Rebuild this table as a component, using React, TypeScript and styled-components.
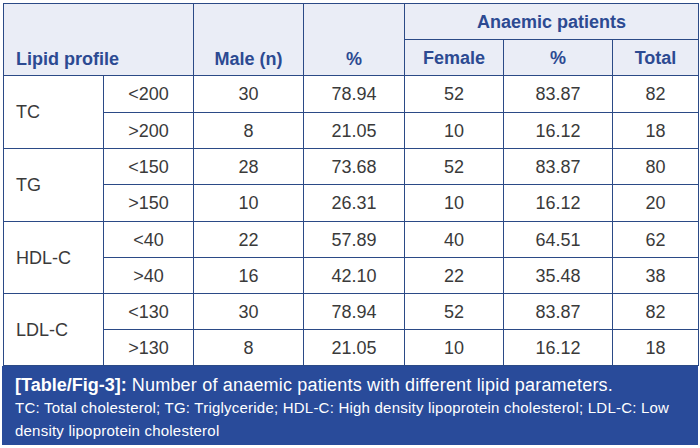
import React from "react";
import styled, { createGlobalStyle } from "styled-components";

const Global = createGlobalStyle`
  html, body { margin: 0; padding: 0; background: #ffffff; }
  body { font-family: "Liberation Sans", Arial, sans-serif; }
`;

const Page = styled.div`
  width: 700px;
  height: 448px;
  padding: 3px 2px 0 2px;
  box-sizing: border-box;
  background: #ffffff;
`;

const Table = styled.table`
  border-collapse: collapse;
  table-layout: fixed;
  width: 695px;
  margin-left: 1px;
`;

const Col = styled.col<{ $w: number }>`
  width: ${(p) => p.$w}px;
`;

const Th = styled.th<{ $left?: boolean; $h?: number }>`
  background: #eaedf6;
  color: #2c4a92;
  font-weight: bold;
  font-size: 18px;
  border: 1px solid #2b4a86;
  text-align: ${(p) => (p.$left ? "left" : "center")};
  padding: 2px 0 0 ${(p) => (p.$left ? "12px" : "0")};
  height: ${(p) => p.$h ?? 36}px;
  vertical-align: middle;
  box-sizing: border-box;
`;

const ThBottom = styled(Th)`
  vertical-align: bottom;
  padding-bottom: 5px;
`;

const Td = styled.td<{ $left?: boolean }>`
  color: #3a3a3a;
  font-size: 18px;
  border: 1px solid #2b4a86;
  text-align: ${(p) => (p.$left ? "left" : "center")};
  padding: 1px 0 0 ${(p) => (p.$left ? "12px" : "0")};
  vertical-align: middle;
  box-sizing: border-box;
`;

const Tr = styled.tr<{ $h: number }>`
  height: ${(p) => p.$h}px;
`;

const Caption = styled.div`
  background: #294b9a;
  color: #ffffff;
  height: 79px;
  box-sizing: border-box;
  padding: 8px 0 0 13px;
`;

const CaptionTitle = styled.div`
  font-size: 18px;
  line-height: 22px;
  letter-spacing: 0.19px;
`;

const CaptionLabel = styled.span`
  font-weight: bold;
  letter-spacing: 0;
`;

const CaptionNote = styled.div`
  font-size: 15px;
  line-height: 23px;
  letter-spacing: 0.22px;
  padding-right: 20px;
`;

type Row = { group: string; range: string; male: string; mp: string; female: string; fp: string; total: string };

const rows: Row[] = [
  { group: "TC", range: "<200", male: "30", mp: "78.94", female: "52", fp: "83.87", total: "82" },
  { group: "TC", range: ">200", male: "8", mp: "21.05", female: "10", fp: "16.12", total: "18" },
  { group: "TG", range: "<150", male: "28", mp: "73.68", female: "52", fp: "83.87", total: "80" },
  { group: "TG", range: ">150", male: "10", mp: "26.31", female: "10", fp: "16.12", total: "20" },
  { group: "HDL-C", range: "<40", male: "22", mp: "57.89", female: "40", fp: "64.51", total: "62" },
  { group: "HDL-C", range: ">40", male: "16", mp: "42.10", female: "22", fp: "35.48", total: "38" },
  { group: "LDL-C", range: "<130", male: "30", mp: "78.94", female: "52", fp: "83.87", total: "82" },
  { group: "LDL-C", range: ">130", male: "8", mp: "21.05", female: "10", fp: "16.12", total: "18" },
];

const heights = [37, 36, 36, 37, 36, 36, 36, 36];

export default function App() {
  return (
    <Page>
      <Global />
      <Table>
        <colgroup>
          <Col $w={100} />
          <Col $w={90} />
          <Col $w={110} />
          <Col $w={101} />
          <Col $w={99} />
          <Col $w={109} />
          <Col $w={86} />
        </colgroup>
        <thead>
          <Tr $h={36}>
            <ThBottom $left colSpan={2} rowSpan={2}>Lipid profile</ThBottom>
            <ThBottom rowSpan={2}>Male (n)</ThBottom>
            <ThBottom rowSpan={2}>%</ThBottom>
            <Th colSpan={3}>Anaemic patients</Th>
          </Tr>
          <Tr $h={36}>
            <Th>Female</Th>
            <Th>%</Th>
            <Th>Total</Th>
          </Tr>
        </thead>
        <tbody>
          {rows.map((r, i) => (
            <Tr key={i} $h={heights[i]}>
              {i % 2 === 0 && (
                <Td $left rowSpan={2}>{r.group}</Td>
              )}
              <Td>{r.range}</Td>
              <Td>{r.male}</Td>
              <Td>{r.mp}</Td>
              <Td>{r.female}</Td>
              <Td>{r.fp}</Td>
              <Td>{r.total}</Td>
            </Tr>
          ))}
        </tbody>
      </Table>
      <Caption>
        <CaptionTitle>
          <CaptionLabel>[Table/Fig-3]:</CaptionLabel> Number of anaemic patients with different lipid parameters.
        </CaptionTitle>
        <CaptionNote>
          TC: Total cholesterol; TG: Triglyceride; HDL-C: High density lipoprotein cholesterol; LDL-C: Low density lipoprotein cholesterol
        </CaptionNote>
      </Caption>
    </Page>
  );
}
